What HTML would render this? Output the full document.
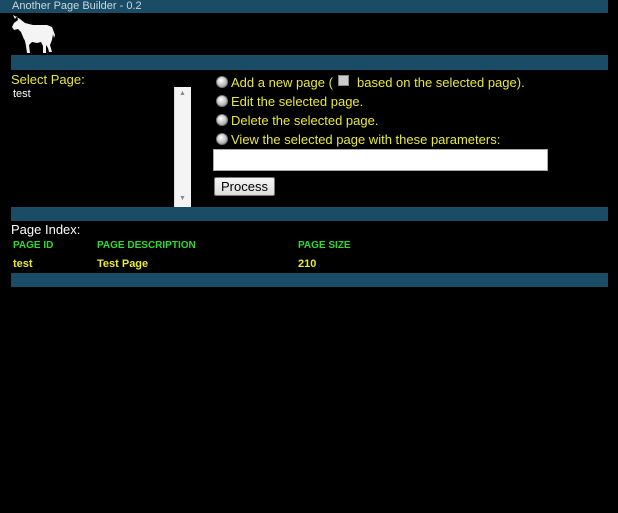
<!DOCTYPE html>
<html><head><style>
body{margin:0;background:#000;width:618px;height:513px;position:relative;overflow:hidden;font-family:"Liberation Sans",Arial,sans-serif}
.a{position:absolute}
.bar{position:absolute;background:#1b4c66;left:11px;width:597px}
.y{color:#e8e83a;font-size:13px}
.r{position:absolute;width:12px;height:12px;border-radius:50%;background:radial-gradient(circle at 40% 35%,#fff,#bbb 60%,#888);border:1px solid #777;box-sizing:border-box}
.h{color:#2fd82f;font-size:10px;font-weight:bold}
.d{color:#e8e83a;font-size:11px;font-weight:bold}
</style></head><body>
<div class="a" style="left:0;top:0;width:608px;height:13px;background:#1b4c66"></div>
<div class="a" style="left:12px;top:0;font-size:11px;color:#c8d8e0;line-height:13px">Another Page Builder - 0.2</div>
<svg class="a" style="left:11px;top:14px" width="46" height="41" viewBox="0 0 46 41">
<g fill="#f4f4f4">
<path d="M2 1 L4 5 L6 2 L7 6 L3 9 L1 13 L3 16 L7 15 L10 18 L12 23 L14 27 L15 32 L16 39 L19 39 L18 31 L21 28 L26 29 L30 28 L32 32 L32 39 L35 39 L35 31 L37 34 L38 38 L41 38 L39 31 L41 26 L42 20 L43 24 L44 21 L41 13 L36 11 L22 11 L14 9 L9 5 Z"/>
</g>
</svg>
<div class="bar" style="top:55px;height:15px"></div>
<div class="a y" style="left:11px;top:72px;font-size:13px">Select Page:</div>
<div class="a" style="left:13px;top:88px;font-size:11px;color:#fff">test</div>
<div class="a" style="left:174px;top:87px;width:17px;height:120px;background:#f4f4f4;border-left:1px solid #ddd;box-sizing:border-box"></div>
<div class="a" style="left:179px;top:90px;font-size:7px;color:#888">▲</div>
<div class="a" style="left:179px;top:195px;font-size:7px;color:#888">▼</div>
<div class="r" style="left:216px;top:76px"></div>
<div class="a y" style="left:231px;top:75px">Add a new page (</div>
<div class="a" style="left:338px;top:75px;width:11px;height:11px;background:#ccc;border:1px solid #888;box-sizing:border-box"></div>
<div class="a y" style="left:357px;top:75px">based on the selected page).</div>
<div class="r" style="left:216px;top:95px"></div>
<div class="a y" style="left:231px;top:94px">Edit the selected page.</div>
<div class="r" style="left:216px;top:114px"></div>
<div class="a y" style="left:231px;top:113px">Delete the selected page.</div>
<div class="r" style="left:216px;top:133px"></div>
<div class="a y" style="left:231px;top:132px">View the selected page with these parameters:</div>
<div class="a" style="left:213px;top:149px;width:335px;height:22px;background:#fff;border:1px solid #aaa;box-sizing:border-box"></div>
<div class="a" style="left:214px;top:177px;width:61px;height:19px;background:linear-gradient(#f6f6f6,#ddd);border:1px solid #777;border-radius:2px;box-sizing:border-box;font-size:13px;text-align:center;line-height:17px;color:#000">Process</div>
<div class="bar" style="top:207px;height:14px"></div>
<div class="a" style="left:11px;top:222px;font-size:13px;color:#fff">Page Index:</div>
<div class="a h" style="left:13px;top:240px">PAGE ID</div>
<div class="a h" style="left:97px;top:240px">PAGE DESCRIPTION</div>
<div class="a h" style="left:298px;top:240px">PAGE SIZE</div>
<div class="a d" style="left:13px;top:258px">test</div>
<div class="a d" style="left:97px;top:258px">Test Page</div>
<div class="a d" style="left:298px;top:258px">210</div>
<div class="bar" style="top:273px;height:14px"></div>
</body></html>
